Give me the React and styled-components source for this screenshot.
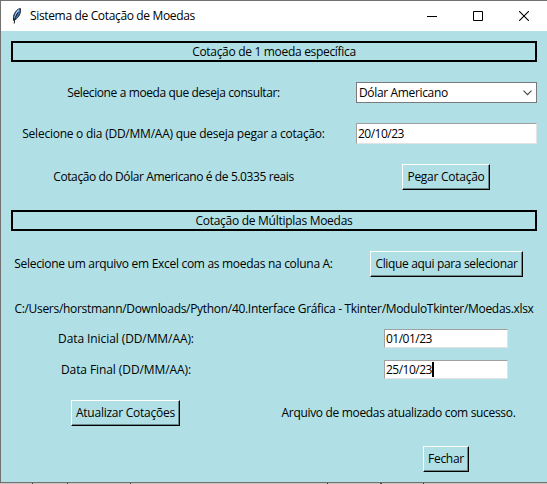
import React from 'react';
import styled, { createGlobalStyle } from 'styled-components';

const Global = createGlobalStyle`
  * { box-sizing: border-box; }
  html, body { margin: 0; background: #c8c4c3; overflow: hidden; }
`;

const Window = styled.main`
  width: 547px;
  height: 483px;
  border: solid #737070;
  border-width: 1px 0 1px 1px;
  background: #b0e0e6;
  color: #000;
  font: 12px/16px 'Open Sans', 'Noto Sans', sans-serif;
`;

const TitleBar = styled.header`
  display: flex;
  align-items: center;
  height: 30px;
  padding-left: 8px;
  background: #fff;
`;

const Feather = styled.svg`
  width: 16px;
  height: 18px;
  margin-right: 5px;
`;

const WindowControls = styled.div`
  display: flex;
  margin-left: auto;
`;

const ControlButton = styled.div`
  display: flex;
  align-items: center;
  justify-content: center;
  width: 46px;
  height: 30px;
`;

const Text = styled.span`
  white-space: nowrap;
  letter-spacing: ${(p) => p.$track}px;
`;

const Body = styled.div`
  padding-top: 10px;
`;

const SectionTitle = styled.h2`
  display: flex;
  align-items: center;
  justify-content: center;
  height: 21px;
  margin: 0 10px 10px;
  border: 2px solid #000;
  font: inherit;
`;

const Row = styled.div`
  display: grid;
  grid-template-columns: ${(p) => p.$columns || '345px 201px'};
  align-items: center;
  justify-items: center;
  height: ${(p) => p.$height}px;
  margin-bottom: ${(p) => p.$gap || 0}px;
`;

const PathRow = styled(Row)`
  padding-top: 7px;
`;

const Select = styled.div`
  display: flex;
  align-items: center;
  justify-content: space-between;
  width: 181px;
  height: 21px;
  padding: 0 4px 0 2px;
  border: 1px solid #7a7a7a;
  background: #fff;
`;

const Entry = styled.div`
  display: flex;
  align-items: center;
  width: ${(p) => p.$width}px;
  height: ${(p) => p.$height}px;
  padding-left: 1px;
  border: 1px solid;
  border-color: #a0a0a0 #e3e3e3 #e3e3e3 #a0a0a0;
  background: #fff;
`;

const Caret = styled.i`
  width: 2px;
  height: 15px;
  background: #000;
`;

const Button = styled.div`
  display: flex;
  align-items: center;
  justify-content: center;
  width: ${(p) => p.$width}px;
  height: 26px;
  border: 1px solid;
  border-color: #fff #000 #000 #fff;
  box-shadow: inset -1px -1px #6b888c;
`;

const Desktop = styled.footer`
  width: 547px;
  height: 1px;
  background: linear-gradient(90deg, transparent 32px, #333 32px 33px, transparent 33px 67px, #333 67px 68px, transparent 68px 130px, #333 130px 131px, transparent 131px 327px, #222 327px 328px, transparent 328px 380px, #444 380px 382px, transparent 382px 423px, #222 423px 424px, transparent 424px);
`;

export default function App() {
  return (
    <>
      <Global />
      <Window>
        <TitleBar>
          <Feather viewBox="0 0 16 18">
            <path d="M11.3 1.5C8.2 2 5.2 5.6 4.6 9.4L4.4 13.4l1.8-.9C9.4 11 12.4 6 11.3 1.5z" fill="#3b72ad" stroke="#1d2733" strokeWidth="1" />
            <path d="M9.8 2.8C7.8 5 6.2 8 5.8 11" fill="none" stroke="#a5cdf0" strokeWidth="1.3" />
            <path d="M9 5.5C6.8 8.8 5.5 12 5.2 16.5" fill="none" stroke="#111" strokeWidth="1" />
          </Feather>
          <Text $track={-0.345}>Sistema de Cotação de Moedas</Text>
          <WindowControls>
            <ControlButton>
              <svg width="10" height="10" shapeRendering="crispEdges"><path d="M0 5h10v1H0z" /></svg>
            </ControlButton>
            <ControlButton>
              <svg width="10" height="10"><path d="M.5.5h9v9h-9z" fill="none" stroke="#000" /></svg>
            </ControlButton>
            <ControlButton>
              <svg width="10" height="10"><path d="M0 0l10 10M10 0L0 10" stroke="#000" strokeWidth="1.1" /></svg>
            </ControlButton>
          </WindowControls>
        </TitleBar>
        <Body>
          <SectionTitle><Text $track={-0.31}>Cotação de 1 moeda específica</Text></SectionTitle>
          <Row $height={41}>
            <Text $track={-0.387}>Selecione a moeda que deseja consultar:</Text>
            <Select>
              <Text $track={-0.35}>Dólar Americano</Text>
              <svg width="9" height="6"><path d="M.5.7l4 4 4-4" fill="none" stroke="#444" strokeWidth="1.1" /></svg>
            </Select>
          </Row>
          <Row $height={41}>
            <Text $track={-0.244}>Selecione o dia (DD/MM/AA) que deseja pegar a cotação:</Text>
            <Entry $width={181} $height={21}><Text $track={-0.5}>20/10/23</Text></Entry>
          </Row>
          <Row $height={46} $gap={10} $columns="345px 200px">
            <Text $track={-0.397}>Cotação do Dólar Americano é de 5.0335 reais</Text>
            <Button $width={88}><Text $track={-0.26}>Pegar Cotação</Text></Button>
          </Row>
          <SectionTitle><Text $track={-0.28}>Cotação de Múltiplas Moedas</Text></SectionTitle>
          <Row $height={46}>
            <Text $track={-0.296}>Selecione um arquivo em Excel com as moedas na coluna A:</Text>
            <Button $width={153}><Text $track={-0.35}>Clique aqui para selecionar</Text></Button>
          </Row>
          <PathRow $height={36} $columns="546px">
            <Text $track={-0.306}>C:/Users/horstmann/Downloads/Python/40.Interface Gráfica - Tkinter/ModuloTkinter/Moedas.xlsx</Text>
          </PathRow>
          <Row $height={31} $columns="250px 95px 200px">
            <Text $track={-0.09}>Data Inicial (DD/MM/AA):</Text>
            <span />
            <Entry $width={124} $height={19}><Text $track={-0.5}>01/01/23</Text></Entry>
          </Row>
          <Row $height={31} $columns="250px 95px 200px">
            <Text $track={-0.09}>Data Final (DD/MM/AA):</Text>
            <span />
            <Entry $width={124} $height={19}><Text $track={-0.5}>25/10/23</Text><Caret /></Entry>
          </Row>
          <Row $height={56} $columns="249px 297px">
            <Button $width={109}><Text $track={-0.245}>Atualizar Cotações</Text></Button>
            <Text $track={-0.325}>Arquivo de moedas atualizado com sucesso.</Text>
          </Row>
          <Row $height={36} $columns="345px 200px">
            <span />
            <Button $width={46}><Text $track={-0.3}>Fechar</Text></Button>
          </Row>
        </Body>
      </Window>
      <Desktop />
    </>
  );
}
